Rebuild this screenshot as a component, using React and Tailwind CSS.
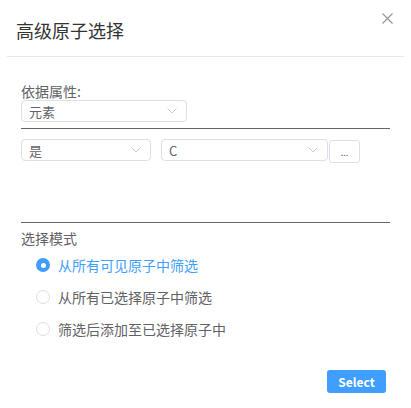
import React, { useState } from 'react';

const font = { fontFamily: '"Noto Sans CJK SC", "Noto Sans", sans-serif' };

const Chevron = () => (
    <svg width="10" height="6" viewBox="0 0 10 6" className="shrink-0">
        <path d="M0.5 0.5 L5 5 L9.5 0.5" fill="none" stroke="#c8cbd2" strokeWidth="1" />
    </svg>
);

const SelectBox = ({ value, width }) => (
    <div className={`${width} h-[22px] flex items-center justify-between border border-[#dcdfe6] rounded-[4px] pl-[7px] pr-[9px] text-[13px] text-[#606266]`}>
        <span className="leading-none">{value}</span>
        <Chevron />
    </div>
);

const Radio = ({ checked, label, onClick }) => (
    <div className="flex items-center h-[18px] cursor-pointer" onClick={onClick}>
        {checked ? (
            <span className="w-[14px] h-[14px] rounded-full bg-[#409eff] flex items-center justify-center">
                <span className="w-[5px] h-[5px] rounded-full bg-white" />
            </span>
        ) : (
            <span className="w-[14px] h-[14px] rounded-full border border-[#dcdfe6] bg-white" />
        )}
        <span className={`ml-[8px] text-[14px] leading-[18px] ${checked ? 'text-[#409eff]' : 'text-[#606266]'}`}>{label}</span>
    </div>
);

const App = () => {
    const [mode, setMode] = useState(0);
    const modes = ['从所有可见原子中筛选', '从所有已选择原子中筛选', '筛选后添加至已选择原子中'];

    return (
        <div className="w-[411px] h-[408px] bg-white flex flex-col" style={font}>
            {/* Header */}
            <div className="mx-[7px] h-[57px] border-b border-[#e8e8e8] flex items-start justify-between">
                <h2 className="pl-[9px] pt-[18px] text-[18px] leading-[24px] text-[#333]">高级原子选择</h2>
                <button className="mt-[13px] mr-[11px]">
                    <svg width="11" height="11" viewBox="0 0 11 11">
                        <path d="M0.5 0.5 L10.5 10.5 M10.5 0.5 L0.5 10.5" stroke="#909399" strokeWidth="1.1" />
                    </svg>
                </button>
            </div>

            {/* Body */}
            <div className="px-[21px] pt-[25px] w-[411px]">
                <div className="text-[14px] leading-[18px] text-[#606266]">依据属性:</div>
                <SelectBox value="元素" width="w-[166px]" />
                <div className="mt-[6px] h-px bg-[#666]" />

                <div className="mt-[10px] flex items-start">
                    <SelectBox value="是" width="w-[130px]" />
                    <div className="ml-[10px]">
                        <SelectBox value="C" width="w-[167px]" />
                    </div>
                    <button className="ml-px mt-px w-[31px] h-[23px] border border-[#dcdfe6] rounded-[3px] flex items-end justify-center pb-[5px] text-[9px] leading-none text-[#606266]">
                        ...
                    </button>
                </div>

                <div className="mt-[59px] h-px bg-[#666]" />

                <div className="mt-[6px] text-[14px] leading-[18px] text-[#606266]">选择模式</div>
                <div className="mt-[9px] pl-[15px] flex flex-col gap-[14px]">
                    {modes.map((m, i) => (
                        <Radio key={m} label={m} checked={mode === i} onClick={() => setMode(i)} />
                    ))}
                </div>
            </div>

            {/* Footer */}
            <div className="mt-auto flex justify-end pr-[25px] pb-[15px]">
                <button className="w-[59px] h-[23px] bg-[#409eff] rounded-[3px] text-white text-[12px] font-semibold leading-none">
                    Select
                </button>
            </div>
        </div>
    );
};

export default App;
